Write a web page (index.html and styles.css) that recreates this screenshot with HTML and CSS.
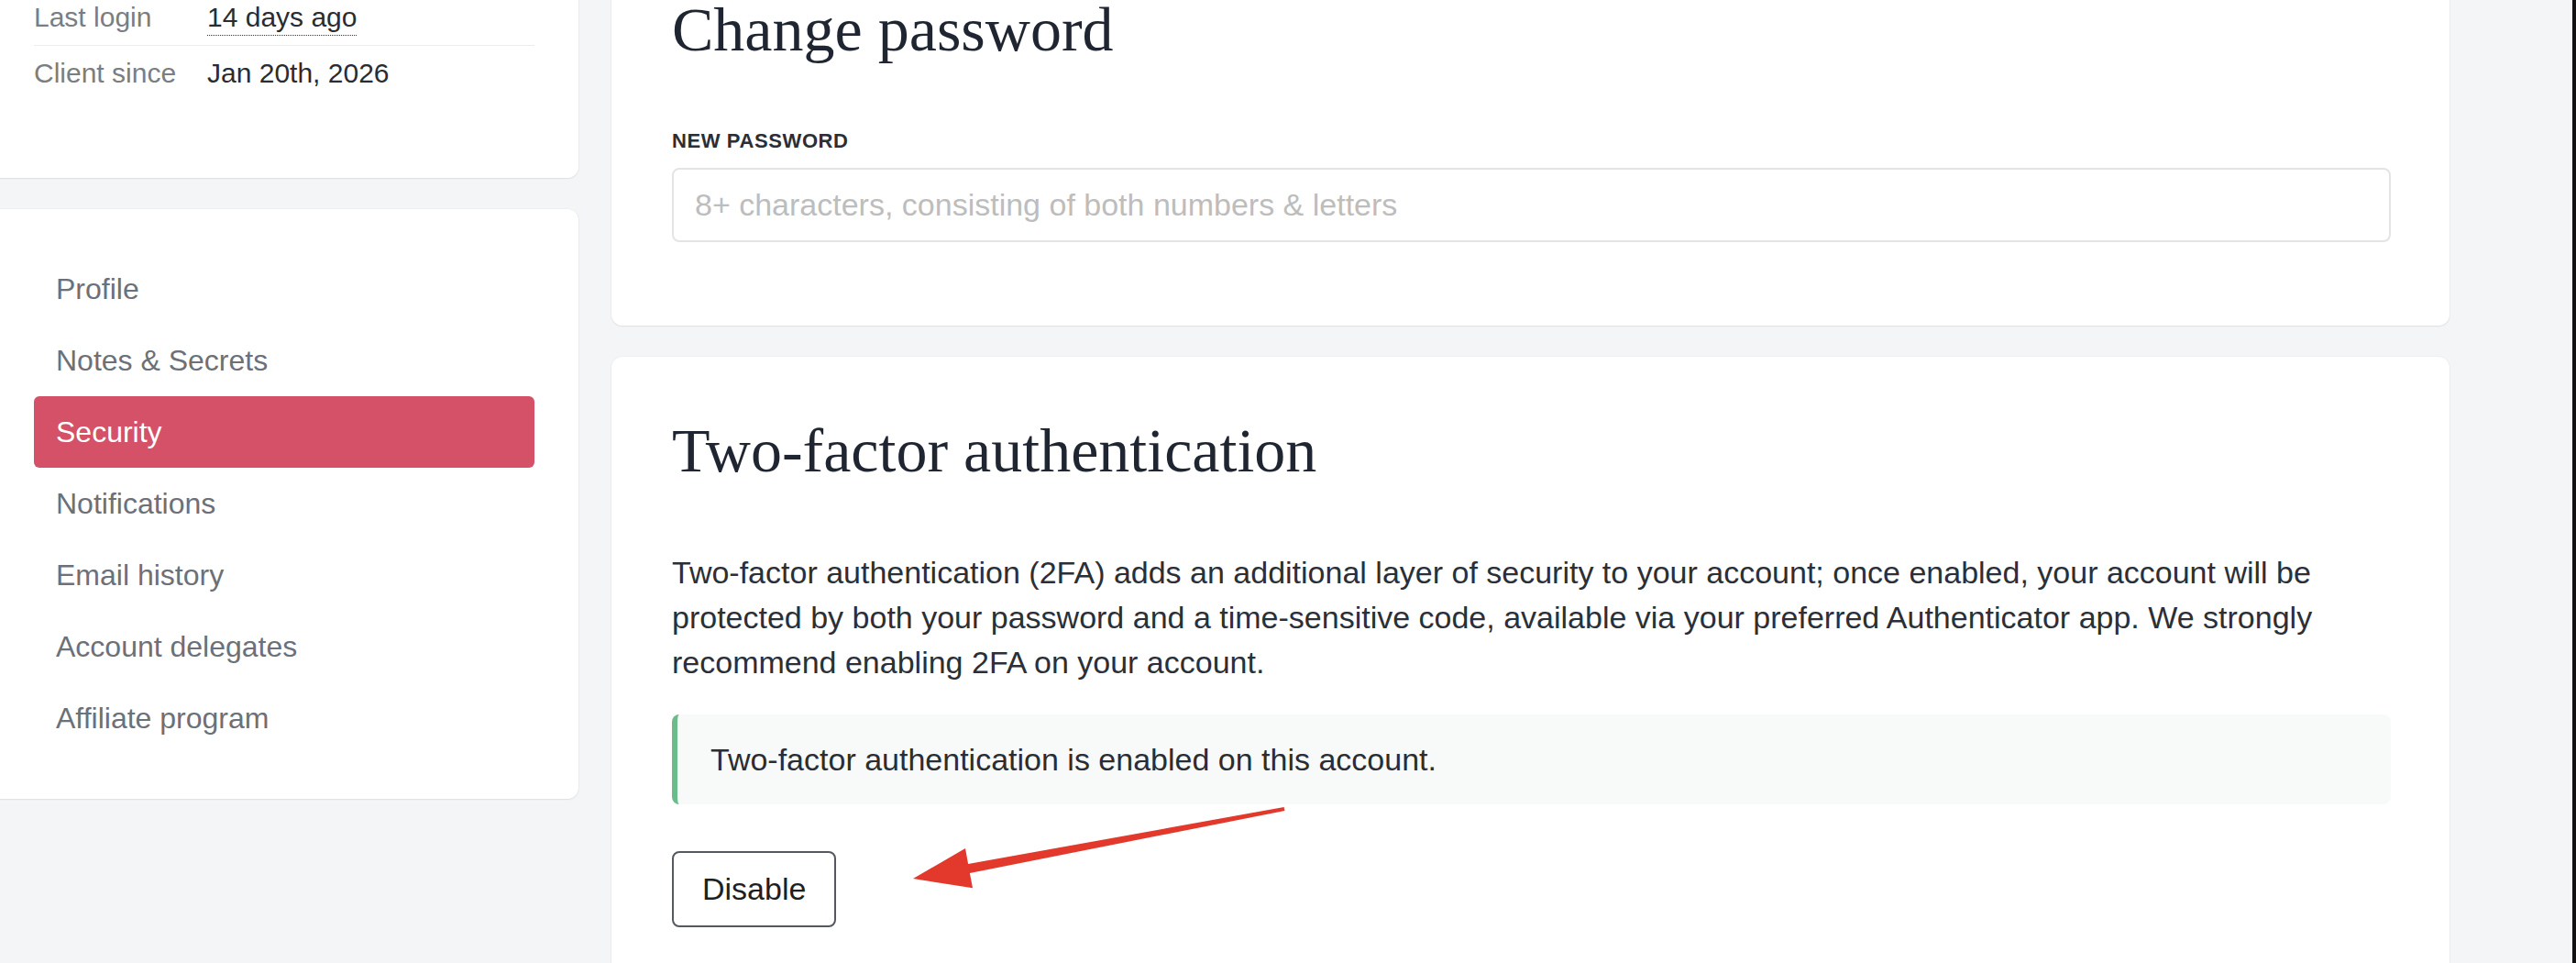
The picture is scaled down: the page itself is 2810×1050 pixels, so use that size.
FILE: index.html
```html
<!DOCTYPE html>
<html lang="en">
<head>
<meta charset="utf-8">
<title>Security settings</title>
<link rel="stylesheet" href="styles.css">
</head>
<body>
<div class="app">
  <div class="page">
    <aside class="sidebar">
      <section class="card info-card">
        <div class="info-row">
          <span class="info-label">Last login</span>
          <span class="info-value"><span class="dotted">14 days ago</span></span>
        </div>
        <div class="info-row">
          <span class="info-label">Client since</span>
          <span class="info-value">Jan 20th, 2026</span>
        </div>
      </section>
      <nav class="card nav-card">
        <a class="nav-item" href="#">Profile</a>
        <a class="nav-item" href="#">Notes &amp; Secrets</a>
        <a class="nav-item active" href="#">Security</a>
        <a class="nav-item" href="#">Notifications</a>
        <a class="nav-item" href="#">Email history</a>
        <a class="nav-item" href="#">Account delegates</a>
        <a class="nav-item" href="#">Affiliate program</a>
      </nav>
    </aside>
    <main class="content">
      <section class="card panel panel-password">
        <h2 class="panel-title">Change password</h2>
        <label class="field-label" for="newpw">New password</label>
        <input class="field-input" id="newpw" type="password" placeholder="8+ characters, consisting of both numbers &amp; letters">
      </section>
      <section class="card panel panel-2fa">
        <h2 class="panel-title">Two-factor authentication</h2>
        <p class="panel-text">Two-factor authentication (2FA) adds an additional layer of security to your account; once enabled, your account will be protected by both your password and a time-sensitive code, available via your preferred Authenticator app. We strongly recommend enabling 2FA on your account.</p>
        <div class="alert-success">Two-factor authentication is enabled on this account.</div>
        <button class="btn-outline" type="button">Disable</button>
      </section>
    </main>
  </div>
  <svg class="annotation" width="2810" height="1050" viewBox="0 0 2810 1050" aria-hidden="true">
    <polygon fill="#e2392c" points="1400.6,880 1056.1,942.1 1053,925 996,958 1061,968.3 1057.9,951.9 1401.4,884"/>
  </svg>
</div>
</body>
</html>
```
FILE: styles.css
```css
* {
  box-sizing: border-box;
}

html, body {
  margin: 0;
  padding: 0;
  height: 100%;
  overflow: hidden;
}

body {
  background: #f4f5f7;
  font-family: "Liberation Sans", Arial, sans-serif;
  color: #2a2d33;
}

.app {
  position: relative;
  height: 1050px;
  border-right: 4px solid #111;
  overflow: hidden;
}

.page {
  display: flex;
  align-items: flex-start;
  gap: 36px;
  margin: -60px 134px 0 -11px;
}

.sidebar {
  width: 642px;
  flex: none;
  display: flex;
  flex-direction: column;
  gap: 34px;
}

.content {
  flex: 1;
  display: flex;
  flex-direction: column;
  gap: 34px;
}

.card {
  background: #ffffff;
  border-radius: 12px;
  box-shadow: 0 1px 2px rgba(0, 0, 0, 0.07), 0 0 0 1px rgba(0, 0, 0, 0.025);
}

/* info card */
.info-card {
  padding: 49px 48px 84px 48px;
}

.info-row {
  display: grid;
  grid-template-columns: 189px 1fr;
  padding: 12px 0;
  font-size: 30px;
  line-height: 36px;
}

.info-row + .info-row {
  border-top: 1px solid #ececec;
}

.info-label {
  color: #7b7d80;
}

.info-value {
  color: #2a2c30;
}

.dotted {
  padding-bottom: 3px;
  border-bottom: 1px dotted #3a3a3a;
}

/* nav card */
.nav-card {
  padding: 48px 48px 49px 48px;
  display: flex;
  flex-direction: column;
}

.nav-item {
  display: block;
  padding: 20px 24px;
  font-size: 32px;
  line-height: 38px;
  color: #6c7078;
  text-decoration: none;
  border-radius: 6px;
}

.nav-item.active {
  background: #d45168;
  color: #ffffff;
}

/* panels */
.panel {
  padding-left: 66px;
  padding-right: 64px;
}

.panel-password {
  padding-top: 62px;
  padding-bottom: 91px;
}

.panel-2fa {
  padding-top: 72px;
  padding-bottom: 100px;
}

.panel-title {
  margin: 0;
  font-family: "Liberation Serif", "Times New Roman", serif;
  font-weight: normal;
  font-size: 68px;
  line-height: 60px;
  color: #1f2632;
}

.field-label {
  display: block;
  margin-top: 79px;
  font-size: 22px;
  line-height: 26px;
  font-weight: bold;
  letter-spacing: 0.6px;
  text-transform: uppercase;
  color: #2b2e35;
}

.field-input {
  display: block;
  width: 100%;
  height: 81px;
  margin-top: 16px;
  padding: 0 23px;
  border: 2px solid #e4e4e4;
  border-radius: 8px;
  background: #ffffff;
  font-family: "Liberation Sans", Arial, sans-serif;
  font-size: 34px;
  color: #2a2d33;
  outline: none;
}

.field-input::placeholder {
  color: #bdbdbd;
}

.panel-text {
  margin: 79px 0 0 0;
  font-size: 34px;
  line-height: 49px;
  color: #2b2f37;
}

.alert-success {
  margin-top: 32px;
  padding: 25px 24px 24px 36px;
  background: #f7faf9;
  border-left: 6px solid #6cbb8b;
  border-radius: 8px;
  font-size: 34px;
  line-height: 49px;
  color: #2a2d33;
}

.btn-outline {
  display: block;
  margin-top: 51px;
  padding: 15px 31px;
  border: 2px solid #55585e;
  border-radius: 8px;
  background: #ffffff;
  font-family: "Liberation Sans", Arial, sans-serif;
  font-size: 34px;
  line-height: 49px;
  color: #1d1f23;
}

.annotation {
  position: absolute;
  left: 0;
  top: 0;
  pointer-events: none;
}
```
